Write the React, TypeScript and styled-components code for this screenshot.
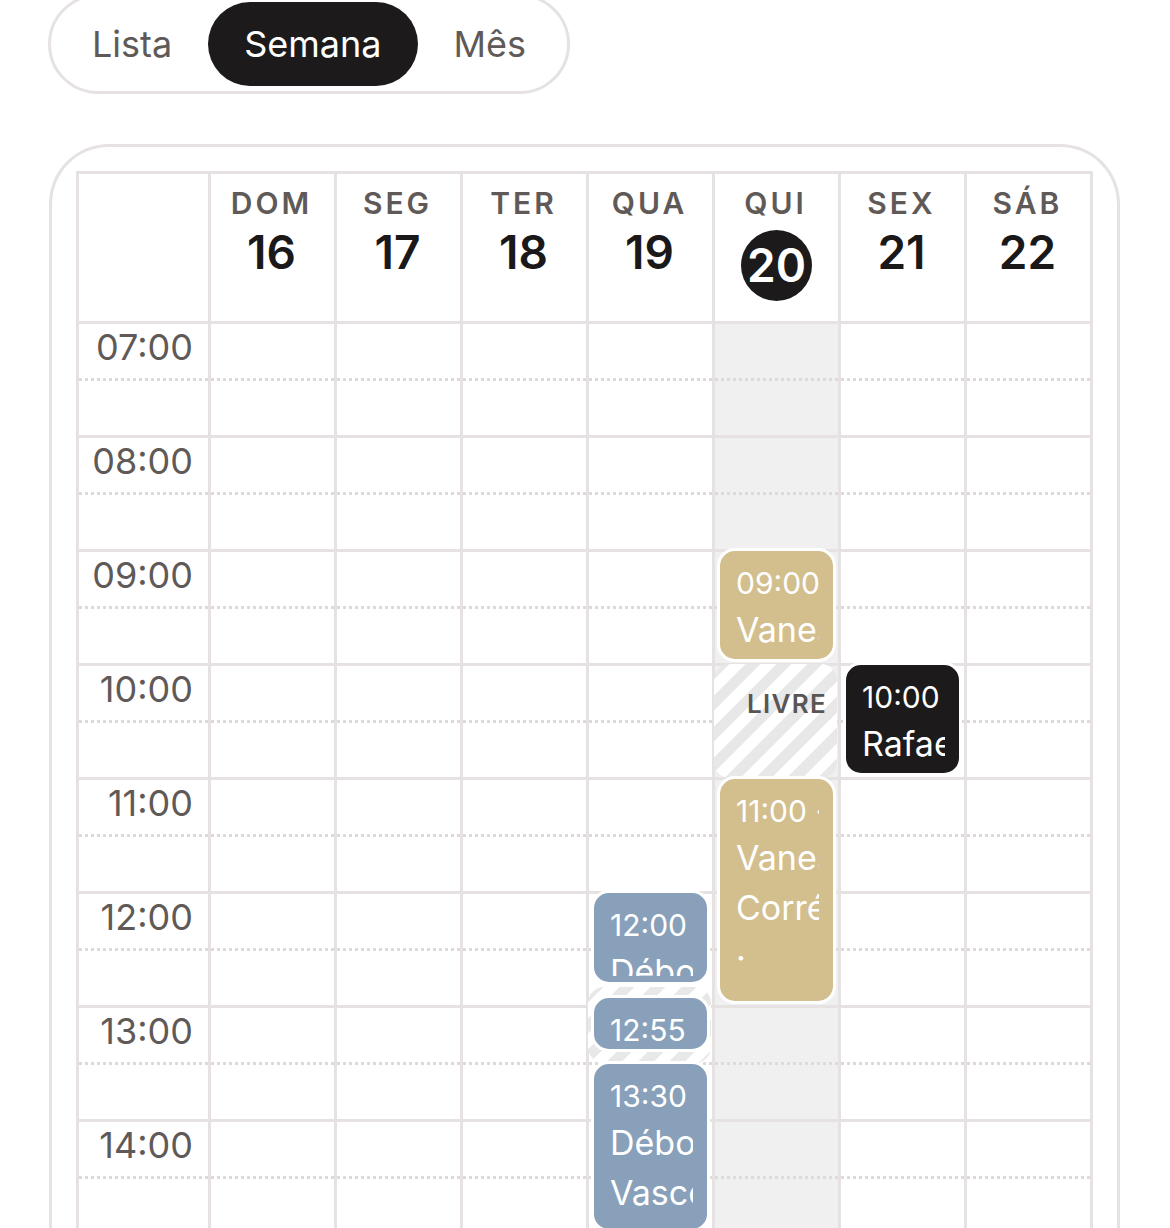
import React from "react";
import styled, { createGlobalStyle, css } from "styled-components";

const LINE = "#e6e2e2";
const MUTED = "#5f5a58";
const INK = "#1c1a1a";
const HOUR = 114;
const PX_PER_MIN = HOUR / 60;

const GlobalStyle = createGlobalStyle`
  html, body { margin: 0; padding: 0; background: #ffffff; }
  body { font-family: Inter, "Noto Sans", sans-serif; overflow: hidden; }
  * { box-sizing: border-box; }
`;

const Page = styled.div`
  display: flex;
  flex-direction: column;
  align-items: flex-start;
  gap: 50px;
  margin-top: -6px;
  padding-left: 48px;
`;

const Toggle = styled.div`
  display: inline-flex;
  border: 3px solid ${LINE};
  border-radius: 999px;
  padding: 5px;
`;

const ToggleButton = styled.button<{ $active?: boolean }>`
  height: 84px;
  padding: 0 36px;
  border: none;
  border-radius: 42px;
  font-family: inherit;
  font-size: 36px;
  font-weight: 400;
  display: flex;
  align-items: center;
  justify-content: center;
  background: ${(p) => (p.$active ? INK : "transparent")};
  color: ${(p) => (p.$active ? "#ffffff" : MUTED)};
`;

const Card = styled.div`
  margin-left: 1px;
  border: 3px solid ${LINE};
  border-bottom: none;
  border-radius: 60px 60px 0 0;
  padding: 24px 24px 0 24px;
`;

const Table = styled.div`
  width: 1017px;
  border: 3px solid ${LINE};
  border-bottom: none;
`;

const Row = styled.div`
  display: grid;
  grid-template-columns: 129px repeat(7, 126px);
`;

const HeaderRow = styled(Row)`
  height: 150px;
  border-bottom: 3px solid ${LINE};
`;

const HeaderCell = styled.div`
  border-left: 3px solid ${LINE};
  display: flex;
  flex-direction: column;
  align-items: center;
  padding-top: 11px;
  gap: 4px;
`;

const DayName = styled.div`
  font-size: 30px;
  font-weight: 600;
  letter-spacing: 0.1em;
  line-height: 36px;
  margin-right: 2px;
  color: ${MUTED};
`;

const DayNumber = styled.div<{ $today?: boolean }>`
  font-size: 46px;
  font-weight: 600;
  line-height: 55px;
  color: #1a1818;
  margin-right: 2px;
  ${(p) =>
    p.$today &&
    css`
      width: 71px;
      height: 71px;
      margin: 5px 0 0 0;
      border-radius: 50%;
      background: ${INK};
      color: #ffffff;
      display: flex;
      align-items: center;
      justify-content: center;
    `}
`;

const TimeColumn = styled.div`
  display: flex;
  flex-direction: column;
`;

const DayColumn = styled.div<{ $today?: boolean }>`
  position: relative;
  border-left: 3px solid ${LINE};
  display: flex;
  flex-direction: column;
  background: ${(p) => (p.$today ? "#f0f0f0" : "#ffffff")};
`;

const Slot = styled.div`
  position: relative;
  height: ${HOUR}px;
  border-bottom: 3px solid ${LINE};
  &::after {
    content: "";
    position: absolute;
    left: 0;
    right: 0;
    top: 54px;
    height: 3px;
    background: repeating-linear-gradient(
      to right,
      #dedada 0 3px,
      transparent 3px 6px
    );
  }
`;

const TimeSlot = styled(Slot)`
  text-align: right;
  padding: 3px 15px 0 0;
  font-size: 36px;
  line-height: 41px;
  color: ${MUTED};
`;

const Event = styled.div<{ $bg: string }>`
  position: absolute;
  left: 2px;
  right: 2px;
  z-index: 2;
  border: 3px solid #ffffff;
  border-radius: 18px;
  background: ${(p) => p.$bg};
  color: #ffffff;
  padding: 10px 14px 6px 16px;
`;

const EventInner = styled.div`
  height: 100%;
  overflow: hidden;
`;

const EventTime = styled.div`
  font-size: 30px;
  line-height: 44px;
  white-space: nowrap;
`;

const EventName = styled.div`
  font-size: 34px;
  line-height: 50px;
`;

const FreeSlot = styled.div`
  position: absolute;
  left: -1px;
  right: 1px;
  z-index: 1;
  border-radius: 16px;
  overflow: hidden;
  background: repeating-linear-gradient(
    135deg,
    #e8e8e8 0 11px,
    #ffffff 11px 22px
  );
  text-align: right;
  padding: 22px 10px 0 0;
`;

const FreeLabel = styled.div`
  font-size: 26px;
  font-weight: 600;
  letter-spacing: 0.05em;
  line-height: 36px;
  color: #5a5555;
`;

type Item =
  | { kind: "event"; start: number; end: number; bg: string; time: string; name: string }
  | { kind: "free"; start: number; end: number; label?: string };

const BLUE = "#88a0b9";
const TAN = "#d3be8e";

const m = (h: number, mm = 0) => (h - 7) * 60 + mm;

const days = [
  { name: "DOM", num: 16 },
  { name: "SEG", num: 17 },
  { name: "TER", num: 18 },
  { name: "QUA", num: 19 },
  { name: "QUI", num: 20, today: true },
  { name: "SEX", num: 21 },
  { name: "SÁB", num: 22 },
];

const items: Record<number, Item[]> = {
  3: [
    { kind: "event", start: m(12), end: m(12, 50), bg: BLUE, time: "12:00 · 12:50", name: "Débora Vasconcelos" },
    { kind: "free", start: m(12, 50), end: m(13, 30) },
    { kind: "event", start: m(12, 55), end: m(13, 25), bg: BLUE, time: "12:55 · 13:25", name: "Débora Vasconcelos" },
    { kind: "event", start: m(13, 30), end: m(15), bg: BLUE, time: "13:30 · 15:00", name: "Débora Vasconcelos" },
  ],
  4: [
    { kind: "event", start: m(9), end: m(10), bg: TAN, time: "09:00 · 10:00", name: "Vanessa Corréa · Manutenção" },
    { kind: "free", start: m(10), end: m(11), label: "LIVRE" },
    { kind: "event", start: m(11), end: m(13), bg: TAN, time: "11:00 · 13:00", name: "Vanessa Corréa · Manutenção" },
  ],
  5: [
    { kind: "event", start: m(10), end: m(11), bg: INK, time: "10:00 · 11:00", name: "Rafael Mendes" },
  ],
};

const hours = Array.from({ length: 9 }, (_, i) => i + 7);
const fmt = (h: number) => `${String(h).padStart(2, "0")}:00`;

export default function App() {
  return (
    <>
      <GlobalStyle />
      <Page>
        <Toggle>
          <ToggleButton>Lista</ToggleButton>
          <ToggleButton $active>Semana</ToggleButton>
          <ToggleButton>Mês</ToggleButton>
        </Toggle>
        <Card>
          <Table>
            <HeaderRow>
              <div />
              {days.map((d) => (
                <HeaderCell key={d.name}>
                  <DayName>{d.name}</DayName>
                  <DayNumber $today={d.today}>{d.num}</DayNumber>
                </HeaderCell>
              ))}
            </HeaderRow>
            <Row>
              <TimeColumn>
                {hours.map((h) => (
                  <TimeSlot key={h}>{fmt(h)}</TimeSlot>
                ))}
              </TimeColumn>
              {days.map((d, di) => (
                <DayColumn key={d.name} $today={d.today}>
                  {hours.map((h) => (
                    <Slot key={h} />
                  ))}
                  {(items[di] || []).map((it, ii) =>
                    it.kind === "event" ? (
                      <Event
                        key={ii}
                        $bg={it.bg}
                        style={{
                          top: it.start * PX_PER_MIN - 4,
                          height: (it.end - it.start) * PX_PER_MIN,
                        }}
                      >
                        <EventInner>
                          <EventTime>{it.time}</EventTime>
                          <EventName>{it.name}</EventName>
                        </EventInner>
                      </Event>
                    ) : (
                      <FreeSlot
                        key={ii}
                        style={{
                          top: it.start * PX_PER_MIN - 2,
                          height: (it.end - it.start) * PX_PER_MIN,
                        }}
                      >
                        {it.label && <FreeLabel>{it.label}</FreeLabel>}
                      </FreeSlot>
                    )
                  )}
                </DayColumn>
              ))}
            </Row>
          </Table>
        </Card>
      </Page>
    </>
  );
}
